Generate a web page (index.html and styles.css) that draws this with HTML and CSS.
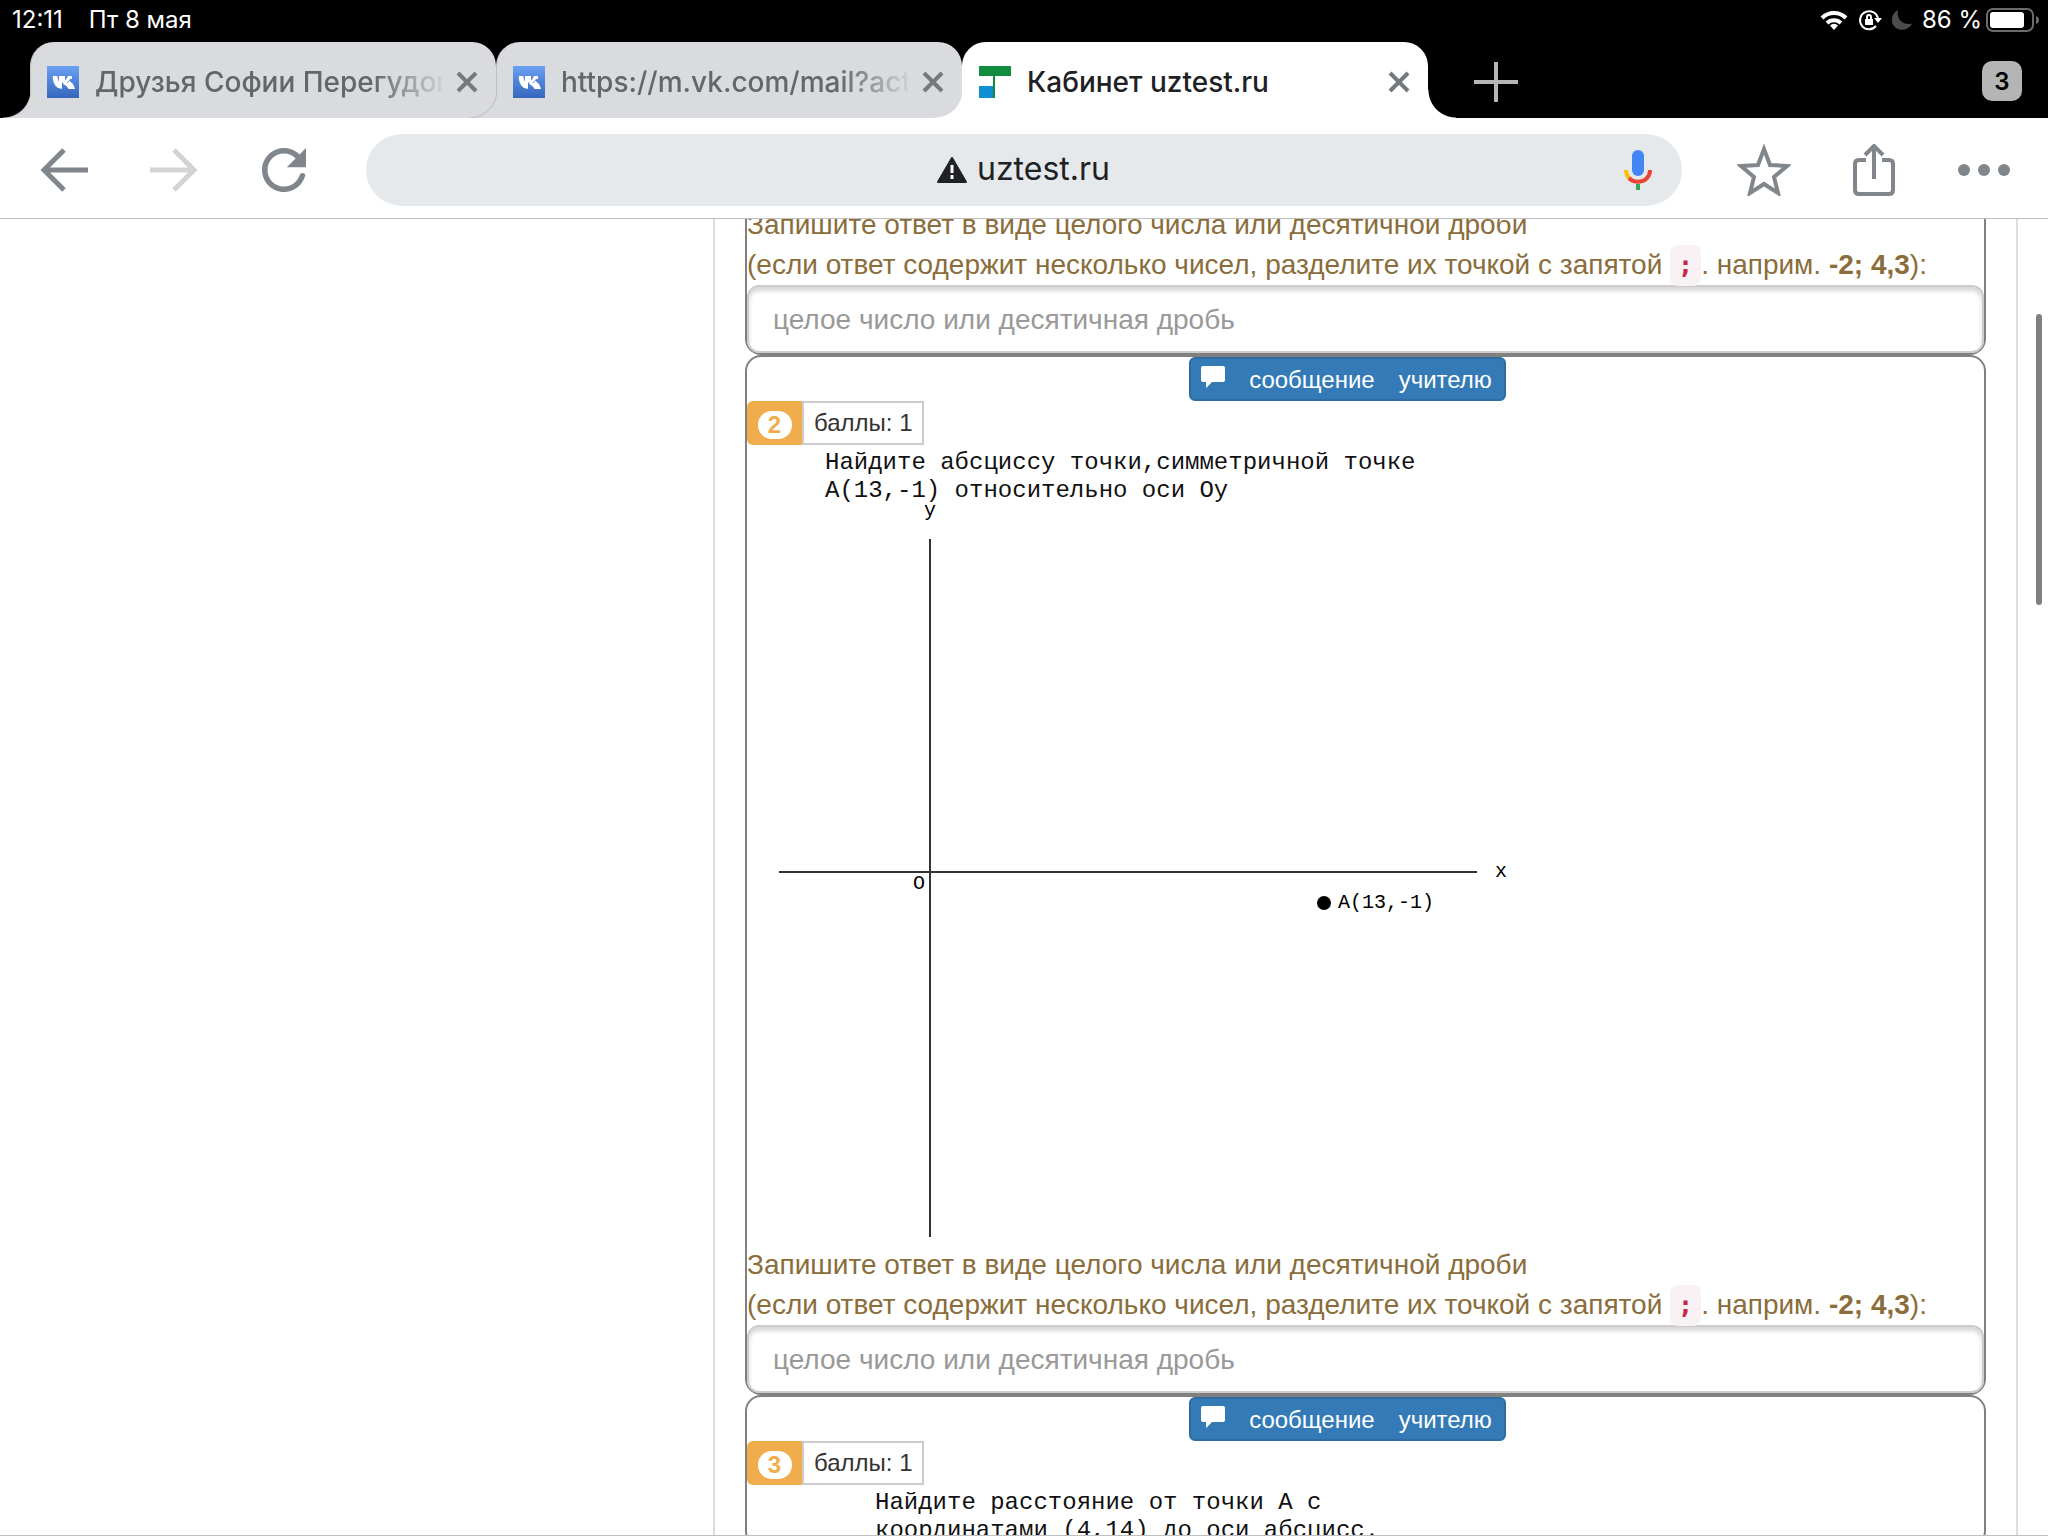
FILE: index.html
```
<!DOCTYPE html>
<html lang="ru">
<head>
    <meta charset="UTF-8">
    <meta name="viewport" content="width=device-width, initial-scale=1.0">
    <title>Кабинет uztest.ru</title>
    <link rel="stylesheet" href="styles.css">
</head>
<body>

<header class="browser">
    <div class="status">
        <div class="status-left">
            <span>12:11</span>
            <span>Пт 8 мая</span>
        </div>
        <div class="status-right">
            <svg class="wifi" viewBox="0 0 28 20" width="28" height="20" fill="none" stroke="#fff" stroke-width="4">
                <path d="M2 8a17 17 0 0 1 24 0"/>
                <path d="M7 13a10 10 0 0 1 14 0"/>
                <path d="M14 20l-4-4.500a5.500 5.500 0 0 1 8 0z" fill="#fff" stroke="none"/>
            </svg>
            <svg class="lock" viewBox="0 0 24 22" width="24" height="22" fill="none" stroke="#fff" stroke-width="2">
                <path d="M18 17a9 9 0 1 1 2-7"/>
                <path d="M16 9h8l-4 5z" fill="#fff" stroke="none"/>
                <path d="M7 10h8v6H7z" fill="#fff" stroke="none"/>
                <path d="M9 10V8a2 2 0 0 1 4 0v2"/>
            </svg>
            <svg class="moon" viewBox="0 0 20 20" width="20" height="20">
                <path d="M6 0C-2 4-2 15 5 18.500c6 3 13 0 15-5C12 16 4 10 6 0z" fill="#4c4c4e"/>
            </svg>
            <span>86 %</span>
            <svg class="battery" viewBox="0 0 54 24" width="54" height="24">
                <rect x="1" y="1" width="46" height="22" rx="6" fill="none" stroke="#6b6b6b" stroke-width="2"/>
                <rect x="4" y="4" width="34" height="16" rx="3" fill="#fff"/>
                <path d="M50 8q3 1 3 4t-3 4z" fill="#6b6b6b"/>
            </svg>
        </div>
    </div>

    <div class="tabs">
        <div class="tab">
            <svg class="favicon" viewBox="0 0 32 32">
                <defs>
                    <linearGradient id="vk" x1="0" y1="0" x2="0" y2="1">
                        <stop offset="0" stop-color="#6ba0f2"/>
                        <stop offset="1" stop-color="#3567bd"/>
                    </linearGradient>
                </defs>
                <rect width="32" height="32" fill="url(#vk)"/>
                <path d="M6 11.500h3c1 4 2.500 7 4.500 7.500v-7.500h3v5M16.500 17c2.500-1 4.500-3 5.500-5.500h3M16.500 16.500c3 1 5 3 6 5h3.500c-1-3-3-4.500-4.500-5.500M15 21.500c-5 0-7-3.500-8-10" fill="none" stroke="#fff" stroke-width="3"/>
            </svg>
            <span class="tab-title fade">Друзья Софии Перегудовой</span>
            <button class="close" aria-label="Закрыть">
                <svg viewBox="0 0 22 22" width="22" height="22"><path d="M2 2l18 18M20 2L2 20"/></svg>
            </button>
        </div>
        <div class="tab">
            <svg class="favicon" viewBox="0 0 32 32">
                <rect width="32" height="32" fill="url(#vk)"/>
                <path d="M6 11.500h3c1 4 2.500 7 4.500 7.500v-7.500h3v5M16.500 17c2.500-1 4.500-3 5.500-5.500h3M16.500 16.500c3 1 5 3 6 5h3.500c-1-3-3-4.500-4.500-5.500M15 21.500c-5 0-7-3.500-8-10" fill="none" stroke="#fff" stroke-width="3"/>
            </svg>
            <span class="tab-title fade">https://m.vk.com/mail?act=show</span>
            <button class="close" aria-label="Закрыть">
                <svg viewBox="0 0 22 22" width="22" height="22"><path d="M2 2l18 18M20 2L2 20"/></svg>
            </button>
        </div>
        <div class="tab active">
            <svg class="favicon" viewBox="0 0 32 32">
                <path d="M0 0h32v10H16v22h-2V10H0z" fill="#118c3e"/>
                <path d="M0 20h14v12H0z" fill="#0d8fd2"/>
            </svg>
            <span class="tab-title">Кабинет uztest.ru</span>
            <button class="close" aria-label="Закрыть">
                <svg viewBox="0 0 22 22" width="22" height="22"><path d="M2 2l18 18M20 2L2 20"/></svg>
            </button>
        </div>
        <button class="new-tab" aria-label="Новая вкладка">
            <svg viewBox="0 0 44 40" width="44" height="40"><path d="M0 20h44M22 0v40" stroke="#b5b5b5" stroke-width="4"/></svg>
        </button>
        <button class="tab-count">3</button>
    </div>

    <div class="toolbar">
        <button class="tool" aria-label="Назад">
            <svg viewBox="0 0 48 44" width="48" height="44" fill="none" stroke="#80868b" stroke-width="5"><path d="M48 22H4M24 2L4 22l20 20"/></svg>
        </button>
        <button class="tool" aria-label="Вперёд">
            <svg viewBox="0 0 48 44" width="48" height="44" fill="none" stroke="#d3d3d3" stroke-width="5"><path d="M0 22h44M24 2l20 20-20 20"/></svg>
        </button>
        <button class="tool" aria-label="Обновить">
            <svg viewBox="4 4 16 16" width="44" height="44"><path d="M17.65 6.35C16.2 4.9 14.21 4 12 4c-4.42 0-7.99 3.58-7.99 8s3.57 8 7.99 8c3.73 0 6.84-2.55 7.73-6 .2-1-1.700-1.300-2.080 0-.82 2.33-3.04 4-5.65 4-3.31 0-6-2.69-6-6s2.69-6 6-6c1.66 0 3.14.69 4.22 1.78L13 11h7V4l-2.350 2.350z" fill="#80868b"/></svg>
        </button>
        <div class="omnibox">
            <label class="address">
                <svg viewBox="0 0 30 26" width="30" height="26">
                    <path d="M15 1L29 25H1z" fill="#202124" stroke="#202124" stroke-width="2" stroke-linejoin="round"/>
                    <path d="M15 8v8M15 18v4" stroke="#fff" stroke-width="3"/>
                </svg>
                <input class="url" type="text" value="uztest.ru" aria-label="Адрес">
            </label>
            <button class="mic" aria-label="Голосовой поиск">
                <svg viewBox="0 0 28 40" width="28" height="40" fill="none" stroke-width="4">
                    <rect x="8" y="0" width="12" height="26" rx="6" fill="#4285f4"/>
                    <path d="M2 20c0 4 1 6 4 9" stroke="#fbbc05"/>
                    <path d="M5 28c5 5 13 5 18 0 2-2 3-5 3-8" stroke="#ea4335"/>
                    <path d="M14 34v6" stroke="#34a853"/>
                </svg>
            </button>
        </div>
        <button class="tool" aria-label="В закладки">
            <svg viewBox="0 0 54 52" width="54" height="52"><path d="M27 5l6 16 17 1-13 11 4 16-14-9-14 9 4-16L4 22l17-1z" fill="none" stroke="#80868b" stroke-width="4"/></svg>
        </button>
        <button class="tool" aria-label="Поделиться">
            <svg viewBox="0 0 42 52" width="42" height="52" fill="none" stroke="#80868b" stroke-width="4"><path d="M13 16H6q-4 0-4 4v26q0 4 4 4h30q4 0 4-4V20q0-4-4-4h-7M21 35V2M12 11l9-9 9 9"/></svg>
        </button>
        <button class="tool" aria-label="Меню">
            <svg viewBox="0 0 52 12" width="52" height="12" fill="#80868b"><circle cx="6" cy="6" r="6"/><circle cx="26" cy="6" r="6"/><circle cx="46" cy="6" r="6"/></svg>
        </button>
    </div>
</header>

<main class="page">
    <div class="side"></div>
    <div class="content">
        <section class="task task-cut">
            <label class="hint" for="answer1">Запишите ответ в виде целого числа или десятичной дроби<br>
                (если ответ содержит несколько чисел, разделите их точкой с запятой <code>;</code>. наприм. <b>-2; 4,3</b>):</label>
            <input class="answer" id="answer1" type="text" placeholder="целое число или десятичная дробь">
        </section>

        <section class="task">
            <div class="task-top">
                <button class="message">
                    <svg viewBox="0 0 24 22" width="24" height="22"><path d="M2 0h20q2 0 2 2v12q0 2-2 2H11l-6 6v-6H2q-2 0-2-2V2q0-2 2-2z" fill="#fff"/></svg>
                    <span>сообщение</span>
                    <span>учителю</span>
                </button>
            </div>
            <div class="points">
                <span class="number"><span class="badge">2</span></span>
                <span class="score">баллы: 1</span>
            </div>
            <p class="question">Найдите абсциссу точки,симметричной точке<br>A(13,-1) относительно оси Oy</p>
            <svg class="plot" viewBox="0 0 800 740" width="800" height="740">
                <path d="M32 367h698M183 34v698" stroke="#333" stroke-width="2"/>
                <circle cx="577" cy="398" r="7"/>
                <text x="177" y="11">y</text>
                <text x="166" y="384">O</text>
                <text x="748" y="372">x</text>
                <text x="591" y="403">A(13,-1)</text>
            </svg>
            <label class="hint" for="answer2">Запишите ответ в виде целого числа или десятичной дроби<br>
                (если ответ содержит несколько чисел, разделите их точкой с запятой <code>;</code>. наприм. <b>-2; 4,3</b>):</label>
            <input class="answer" id="answer2" type="text" placeholder="целое число или десятичная дробь">
        </section>

        <section class="task">
            <div class="task-top">
                <button class="message">
                    <svg viewBox="0 0 24 22" width="24" height="22"><path d="M2 0h20q2 0 2 2v12q0 2-2 2H11l-6 6v-6H2q-2 0-2-2V2q0-2 2-2z" fill="#fff"/></svg>
                    <span>сообщение</span>
                    <span>учителю</span>
                </button>
            </div>
            <div class="points">
                <span class="number"><span class="badge">3</span></span>
                <span class="score">баллы: 1</span>
            </div>
            <p class="question indent">Найдите расстояние от точки A с<br>координатами (4,14) до оси абсцисс.</p>
        </section>
    </div>
    <div class="scrollbar"></div>
</main>

</body>
</html>
```
FILE: styles.css
```
* {
    box-sizing: border-box;
}
body {
    margin: 0;
    height: 100vh;
    display: flex;
    flex-direction: column;
    overflow: hidden;
    background-color: #fff;
    color: #333;
    font-family: "Liberation Sans", Arial, sans-serif;
    font-size: 28px;
    line-height: 40px;
}
button {
    margin: 0;
    padding: 0;
    border: none;
    background: none;
    font-family: inherit;
    cursor: pointer;
}
svg {
    display: block;
    flex: none;
}

/* browser */
.browser {
    flex: none;
    background-color: #000;
    font-family: Inter, sans-serif;
}
.status {
    display: flex;
    justify-content: space-between;
    height: 42px;
    padding: 0 8px 2px 12px;
    color: #fff;
    font-size: 24px;
}
.status-left {
    display: flex;
    gap: 26px;
}
.status-right {
    display: flex;
    align-items: center;
    gap: 10px;
}
.battery {
    margin-left: -6px;
}
.tabs {
    display: flex;
    align-items: center;
    height: 76px;
    padding: 0 26px 0 30px;
}
.tab {
    position: relative;
    display: flex;
    align-items: center;
    flex: 0 1 466px;
    min-width: 0;
    height: 76px;
    padding: 4px 18px 0 16px;
    border-left: 1px solid #c0c0c4;
    border-radius: 24px 24px 0 0;
    background-color: #dadbdf;
    color: #63666a;
}
.tab.active {
    border-color: #fff;
    background-color: #fff;
    color: #202124;
}
/* curved feet of the tabs */
.tab::before,
.tab.active::after {
    content: "";
    position: absolute;
    bottom: 0;
    width: 28px;
    height: 28px;
}
.tab::before {
    left: -28px;
    background: radial-gradient(circle at 0 0, transparent 27px, #c0c0c4 28px, #dadbdf 29px);
}
.tab.active::before {
    background: radial-gradient(circle at 0 0, transparent 27px, #fff 28px);
}
.tab.active::after {
    right: -28px;
    background: radial-gradient(circle at 100% 0, transparent 27px, #fff 28px);
}
.favicon {
    width: 32px;
    height: 32px;
    margin-right: 16px;
}
.tab-title {
    flex: 1;
    min-width: 0;
    overflow: hidden;
    margin-right: 14px;
    font-size: 28px;
    font-weight: 500;
    white-space: nowrap;
}
.fade {
    -webkit-mask-image: linear-gradient(to right, #000 80%, transparent 102%);
    mask-image: linear-gradient(to right, #000 80%, transparent 102%);
}
.close svg {
    fill: none;
    stroke: #75797d;
    stroke-width: 4px;
}
.new-tab {
    margin: 4px 0 0 46px;
}
.tab-count {
    width: 40px;
    height: 40px;
    margin-top: 2px;
    margin-left: auto;
    border-radius: 10px;
    background-color: #b5b5b5;
    color: #000;
    font-size: 24px;
    font-weight: 600;
}
.toolbar {
    display: flex;
    align-items: center;
    height: 101px;
    padding: 3px 9px 0;
    border-bottom: 1px solid #bdbfc1;
    background-color: #fff;
}
.tool {
    display: flex;
    justify-content: center;
    width: 110px;
}
.omnibox {
    display: grid;
    grid-template-columns: 1fr auto 1fr;
    align-items: center;
    flex: 1;
    height: 72px;
    margin: 0 27px;
    padding: 0 30px;
    border-radius: 36px;
    background-color: #e6e9eb;
}
.address {
    grid-column: 2;
    display: flex;
    align-items: center;
    gap: 10px;
}
.url {
    width: 134px;
    padding: 0 0 2px;
    border: none;
    outline: none;
    background: none;
    color: #202124;
    font-family: inherit;
    font-size: 32px;
}
.mic {
    justify-self: end;
}

/* page */
.page {
    position: relative;
    display: flex;
    flex: 1;
    min-height: 0;
    overflow: hidden;
    border-bottom: 1px solid #bdbfc1;
}
.side {
    width: 713px;
    flex: none;
}
.content {
    flex: 1;
    margin-right: 30px;
    padding: 0 30px;
    border: solid #ddd;
    border-width: 0 2px;
}
.task {
    border: 2px solid #808080;
    border-radius: 16px;
}
.task-cut {
    margin-top: -14px;
    border-top: none;
    border-radius: 0 0 16px 16px;
}
.task-top {
    display: flex;
    justify-content: center;
    padding-right: 36px;
}
.message {
    display: flex;
    align-items: center;
    gap: 24px;
    height: 44px;
    padding: 2px 12px 0 10px;
    border: 2px solid #2e6da4;
    border-radius: 6px;
    background-color: #337ab7;
    color: #fff;
    font-size: 24px;
}
.message svg {
    margin-bottom: 6px;
}
.points {
    display: flex;
    height: 44px;
    font-size: 24px;
}
.number {
    display: flex;
    align-items: center;
    justify-content: center;
    width: 55px;
    padding-top: 4px;
    border-radius: 6px 0 0 6px;
    background-color: #f0ad4e;
}
.badge {
    width: 34px;
    border-radius: 14px;
    background-color: #fff;
    color: #f0ad4e;
    font-weight: bold;
    line-height: 28px;
    text-align: center;
}
.score {
    padding: 0 10px;
    border: 2px solid #ccc;
}
.question {
    margin: 0;
    padding: 4px 0 0 78px;
    color: #111;
    font-family: "Liberation Mono", "Courier New", monospace;
    font-size: 24px;
    line-height: 28px;
}
.indent {
    padding-left: 128px;
}
.plot {
    overflow: visible;
    font-family: "Liberation Mono", "Courier New", monospace;
    font-size: 20px;
}
.hint {
    display: block;
    color: #8a6d3b;
}
.hint code {
    padding: 6px 8px;
    border-radius: 8px;
    background-color: #f9f2f4;
    color: #c7254e;
    font-family: "DejaVu Sans Mono", monospace;
    font-size: 25px;
    font-weight: bold;
    line-height: 1;
}
.answer {
    display: block;
    width: 100%;
    height: 68px;
    padding: 2px 24px 0;
    border: 2px solid #ccc;
    border-radius: 12px;
    box-shadow: inset 0 4px 4px rgba(0, 0, 0, 0.16);
    background-color: #fff;
    color: #555;
    font-family: inherit;
    font-size: 28px;
}
.answer::placeholder {
    color: #999;
    opacity: 1;
}
.scrollbar {
    position: absolute;
    top: 95px;
    right: 6px;
    width: 6px;
    height: 291px;
    border-radius: 3px;
    background-color: #808080;
}
```
